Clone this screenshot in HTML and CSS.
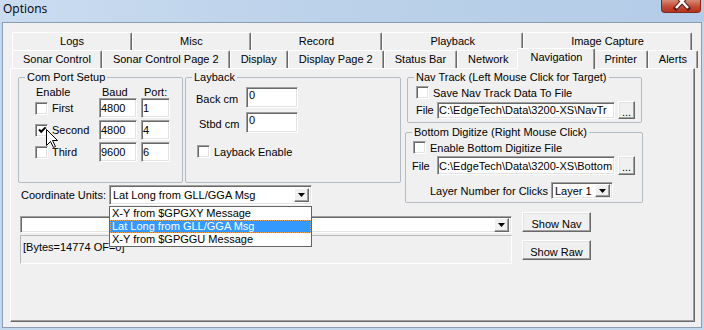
FILE: index.html
```html
<!DOCTYPE html>
<html>
<head>
    <meta charset="UTF-8">
    <title>Options</title>
    <link rel="stylesheet" href="styles.css">
</head>
<body>
    <div class="window">
        <div class="titlebar">
            <span class="title">Options</span>
            <span class="close">
                <svg width="40" height="12" viewBox="0 0 40 12">
                    <path d="M14 -5 L26 8 M26 -5 L14 8" stroke="#5b1d14" stroke-width="4.5" stroke-linecap="square"/>
                    <path d="M14 -5 L26 8 M26 -5 L14 8" stroke="#fff" stroke-width="2.5"/>
                </svg>
            </span>
        </div>

        <div class="client">
            <div class="tabs">
                <div class="tab-row">
                    <div class="tab">Logs</div>
                    <div class="tab">Misc</div>
                    <div class="tab">Record</div>
                    <div class="tab">Playback</div>
                    <div class="tab">Image Capture</div>
                </div>
                <div class="tab-row">
                    <div class="tab">Sonar Control</div>
                    <div class="tab">Sonar Control Page 2</div>
                    <div class="tab">Display</div>
                    <div class="tab">Display Page 2</div>
                    <div class="tab">Status Bar</div>
                    <div class="tab">Network</div>
                    <div class="tab active">Navigation</div>
                    <div class="tab">Printer</div>
                    <div class="tab">Alerts</div>
                </div>
            </div>

            <div class="panel">
                <div class="upper">
                    <div class="upper-left">
                        <div class="groups">
                            <fieldset class="group com-port">
                                <legend>Com Port Setup</legend>
                                <div class="port-grid port-head">
                                    <span class="head-enable">Enable</span>
                                    <span class="head-baud">Baud</span>
                                    <span class="head-port">Port:</span>
                                </div>
                                <div class="port-grid port-row">
                                    <span class="check-line"><span class="cb"></span><span class="cb-label">First</span></span>
                                    <span class="field baud">4800</span>
                                    <span class="field port">1</span>
                                </div>
                                <div class="port-grid port-row">
                                    <span class="check-line">
                                        <span class="cb">
                                            <svg width="9" height="9" viewBox="0 0 9 9"><polyline points="1,3.5 3.2,5.8 7.6,1.4" fill="none" stroke="#000" stroke-width="2"/></svg>
                                        </span>
                                        <span class="cb-label">Second</span>
                                    </span>
                                    <span class="field baud">4800</span>
                                    <span class="field port">4</span>
                                </div>
                                <div class="port-grid port-row">
                                    <span class="check-line"><span class="cb"></span><span class="cb-label">Third</span></span>
                                    <span class="field baud">9600</span>
                                    <span class="field port">6</span>
                                </div>
                            </fieldset>

                            <fieldset class="group layback">
                                <legend>Layback</legend>
                                <div class="lb-row">
                                    <span class="lb-label">Back cm</span>
                                    <span class="field lb-field">0</span>
                                </div>
                                <div class="lb-row second">
                                    <span class="lb-label">Stbd cm</span>
                                    <span class="field lb-field">0</span>
                                </div>
                                <div class="check-line lb-check">
                                    <span class="cb"></span><span class="cb-label">Layback Enable</span>
                                </div>
                            </fieldset>
                        </div>

                        <div class="coord-row">
                            <span class="coord-label">Coordinate Units:</span>
                            <div class="combo coord-combo">
                                <span class="combo-text">Lat Long from GLL/GGA Msg</span>
                                <span class="combo-btn"><svg width="7" height="4" viewBox="0 0 7 4"><polygon points="0,0 7,0 3.5,4" fill="#000"/></svg></span>
                                <div class="drop-list">
                                    <div class="drop-item">X-Y from $GPGXY Message</div>
                                    <div class="drop-item selected">Lat Long from GLL/GGA Msg</div>
                                    <div class="drop-item">X-Y from $GPGGU Message</div>
                                </div>
                            </div>
                        </div>
                    </div>

                    <div class="upper-right">
                        <fieldset class="group nav-track">
                            <legend>Nav Track (Left Mouse Click for Target)</legend>
                            <div class="check-line nav-check">
                                <span class="cb"></span><span class="cb-label">Save Nav Track Data To File</span>
                            </div>
                            <div class="file-row">
                                <span class="file-label">File</span>
                                <span class="field file-field">C:\EdgeTech\Data\3200-XS\NavTr</span>
                                <span class="btn dots">...</span>
                            </div>
                        </fieldset>

                        <fieldset class="group bottom-dig">
                            <legend>Bottom Digitize (Right Mouse Click)</legend>
                            <div class="check-line nav-check">
                                <span class="cb"></span><span class="cb-label">Enable Bottom Digitize File</span>
                            </div>
                            <div class="file-row">
                                <span class="file-label">File</span>
                                <span class="field file-field">C:\EdgeTech\Data\3200-XS\Bottom</span>
                                <span class="btn dots">...</span>
                            </div>
                            <div class="layer-row">
                                <span class="layer-label">Layer Number for Clicks</span>
                                <div class="combo layer-combo">
                                    <span class="combo-text">Layer 1</span>
                                    <span class="combo-btn"><svg width="7" height="4" viewBox="0 0 7 4"><polygon points="0,0 7,0 3.5,4" fill="#000"/></svg></span>
                                </div>
                            </div>
                        </fieldset>
                    </div>
                </div>

                <div class="lower">
                    <div class="lower-left">
                        <div class="combo msg-combo">
                            <span class="combo-text"></span>
                            <span class="combo-btn"><svg width="7" height="4" viewBox="0 0 7 4"><polygon points="0,0 7,0 3.5,4" fill="#000"/></svg></span>
                        </div>
                        <div class="bytes-box">[Bytes=14774 OF=0]</div>
                    </div>
                    <div class="lower-right">
                        <span class="btn big-btn">Show Nav</span>
                        <span class="btn big-btn raw">Show Raw</span>
                    </div>
                </div>
            </div>
        </div>

        <!-- mouse pointer resting over the Second checkbox -->
        <svg class="cursor" width="13" height="20" viewBox="0 0 13 20">
            <polygon points="0.5,0.5 0.5,16.5 4.5,12.5 7.5,18.5 9.5,17.5 6.5,11.5 11.5,11.5" fill="#fff" stroke="#000" stroke-width="1"/>
        </svg>
    </div>
</body>
</html>
```

FILE: styles.css
```css
* {
    box-sizing: border-box;
}
body {
    margin: 0;
    width: 704px;
    height: 330px;
    overflow: hidden;
    background: #c3d7ed;
    font-family: "Liberation Sans", Arial, sans-serif;
    font-size: 11px;
    color: #000;
}
.window {
    position: relative;
    height: 330px;
    display: flex;
    flex-direction: column;
}

/* title bar */
.titlebar {
    height: 22px;
    display: flex;
    justify-content: space-between;
    align-items: flex-start;
    background: linear-gradient(90deg, #cadcf0 0%, #bcd2ea 45%, #b4cce7 100%);
}
.title {
    font-family: "Open Sans", "Liberation Sans", sans-serif;
    font-size: 12px;
    line-height: 16px;
    margin: 1px 0 0 3px;
    color: #000;
}
.close {
    width: 40px;
    height: 13px;
    margin-right: 3px;
    border: 1px solid #7a2b20;
    border-top: none;
    border-radius: 0 0 4px 4px;
    background: linear-gradient(#d58a78, #c64a33 55%, #b5331e);
    overflow: hidden;
}
.close svg {
    display: block;
}

/* client area */
.client {
    margin: 0 2px;
    height: 306px;
    border: 1px solid #8d9db1;
    background: #f0f0f0;
}
.tabs {
    margin-top: 9px;
    padding: 0 9px;
}
.tab-row {
    display: flex;
    height: 18px;
}
.tab {
    flex: 1 1 auto;
    padding: 0 10px;
    text-align: center;
    white-space: nowrap;
    line-height: 17px;
    background: #f0f0f0;
    border-top: 1px solid #fff;
    border-left: 1px solid #fff;
    border-right: 1px solid #696969;
    box-shadow: inset -1px 0 0 #a0a0a0;
    border-radius: 2px 2px 0 0;
}
.tab.active {
    position: relative;
    z-index: 1;
    align-self: flex-start;
    height: 21px;
    margin: -2px -2px 0;
    padding: 0 12px;
}

.panel {
    height: 254px;
    margin: 0 6px 0 7px;
    padding: 2px 0 0 7px;
    border-top: 1px solid #fff;
    border-left: 1px solid #fff;
    border-right: 1px solid #696969;
    border-bottom: 1px solid #696969;
    box-shadow: inset -1px -1px 0 #a0a0a0;
}

/* group boxes */
.group {
    margin: 0;
    padding: 0;
    min-width: 0;
    border: 1px solid #b3bcc5;
    border-radius: 2px;
}
.group legend {
    margin-left: 6px;
    padding: 0 2px;
    line-height: 13px;
}
.upper {
    display: flex;
    align-items: flex-start;
}
.upper-left {
    width: 383px;
}
.groups {
    display: flex;
}
.com-port {
    width: 165px;
    height: 112px;
}
.layback {
    width: 216px;
    height: 112px;
    margin-left: 2px;
}
.upper-right {
    width: 238px;
    margin-left: 4px;
}
.nav-track {
    width: 235px;
    height: 52px;
    margin-left: 2px;
}
.bottom-dig {
    width: 238px;
    height: 77px;
    margin-top: 3px;
}

/* common controls */
.field {
    display: flex;
    align-items: center;
    padding: 0 1px;
    background: #fff;
    white-space: nowrap;
    overflow: hidden;
    border: 1px solid;
    border-color: #a0a0a0 #fff #fff #a0a0a0;
    box-shadow: inset 1px 1px 0 #696969, inset -1px -1px 0 #e3e3e3;
}
.cb {
    display: inline-flex;
    align-items: center;
    justify-content: center;
    width: 13px;
    height: 13px;
    flex: none;
    background: #fff;
    border: 1px solid;
    border-color: #a0a0a0 #fff #fff #a0a0a0;
    box-shadow: inset 1px 1px 0 #696969, inset -1px -1px 0 #e3e3e3;
}
.cb svg {
    display: block;
    margin: 1px 0 0 1px;
}
.check-line {
    display: flex;
    align-items: center;
}
.cb-label {
    margin-left: 4px;
    white-space: nowrap;
}
.btn {
    display: flex;
    align-items: center;
    justify-content: center;
    background: #f0f0f0;
    white-space: nowrap;
    border: 1px solid;
    border-color: #fff #696969 #696969 #fff;
    box-shadow: inset -1px -1px 0 #a0a0a0, inset 1px 1px 0 #e3e3e3;
}
.combo {
    position: relative;
    display: flex;
    align-items: center;
    background: #fff;
    border: 1px solid;
    border-color: #a0a0a0 #fff #fff #a0a0a0;
    box-shadow: inset 1px 1px 0 #696969, inset -1px -1px 0 #e3e3e3;
}
.combo-text {
    flex: 1;
    padding-left: 3px;
    white-space: nowrap;
}
.combo-btn {
    display: flex;
    align-items: center;
    justify-content: center;
    width: 15px;
    height: 14px;
    margin-right: 2px;
    background: #f0f0f0;
    border: 1px solid;
    border-color: #fff #696969 #696969 #fff;
    box-shadow: inset -1px -1px 0 #a0a0a0;
}

/* com port */
.port-grid {
    display: grid;
    grid-template-columns: 64px 42px 29px;
    padding-left: 16px;
}
.port-head {
    margin-top: 2px;
    height: 12px;
    line-height: 12px;
}
.head-enable {
    margin-left: 1px;
}
.head-baud,
.head-port {
    margin-left: 3px;
}
.port-row {
    height: 20px;
    margin-bottom: 2px;
}
.field.baud {
    width: 38px;
}
.field.port {
    width: 29px;
}

/* layback */
.lb-row {
    display: flex;
    height: 21px;
    margin-top: 3px;
    padding-left: 10px;
}
.lb-row.second {
    margin-top: 4px;
}
.lb-label {
    width: 50px;
    margin-top: 6px;
    line-height: 13px;
}
.lb-row.second .lb-label {
    padding-left: 3px;
}
.field.lb-field {
    width: 52px;
    align-items: flex-start;
    padding-top: 1px;
    padding-left: 2px;
}
.lb-check {
    margin-top: 12px;
    padding-left: 11px;
}

/* nav track / bottom digitize */
.nav-check {
    margin-top: 2px;
    padding-left: 8px;
}
.bottom-dig .nav-check {
    padding-left: 7px;
}
.file-row {
    display: flex;
    align-items: center;
    height: 18px;
    margin-top: 2px;
    padding-left: 8px;
}
.file-label {
    width: 21px;
}
.field.file-field {
    width: 178px;
    height: 17px;
    padding-left: 1px;
}
.btn.dots {
    width: 17px;
    height: 18px;
    margin-left: 3px;
    padding-top: 3px;
}
.bottom-dig .file-row {
    height: 19px;
    padding-left: 6px;
}
.bottom-dig .file-label {
    width: 25px;
}
.bottom-dig .field.file-field,
.bottom-dig .btn.dots {
    height: 19px;
}
.layer-row {
    display: flex;
    align-items: center;
    margin-top: 7px;
    padding-left: 24px;
}
.layer-label {
    width: 121px;
    white-space: nowrap;
}
.layer-combo {
    width: 62px;
    height: 17px;
}
.layer-combo .combo-btn {
    height: 13px;
}

/* coordinate units */
.coord-row {
    display: flex;
    align-items: center;
    height: 20px;
    margin-top: 2px;
    padding-left: 3px;
}
.coord-label {
    width: 88px;
}
.coord-combo {
    width: 203px;
    height: 20px;
}
.drop-list {
    position: absolute;
    z-index: 5;
    top: calc(100% + 2px);
    left: -1px;
    width: 203px;
    background: #fff;
    border: 1px solid #646464;
}
.drop-item {
    height: 13px;
    line-height: 13px;
    padding-left: 2px;
    white-space: nowrap;
}
.drop-item.selected {
    background: #3399ff;
    color: #fff;
    outline: 1px dotted #e9a25c;
    outline-offset: -1px;
}

/* message area */
.lower {
    display: flex;
    align-items: flex-start;
    margin-top: 7px;
    padding-left: 2px;
}
.lower-left {
    width: 492px;
    margin-top: 4px;
}
.msg-combo {
    height: 17px;
}
.bytes-box {
    height: 29px;
    margin-top: 2px;
    padding: 5px 0 0 2px;
    line-height: 13px;
    border: 1px solid;
    border-color: #b9b9b9 #fff #fff #b9b9b9;
}
.lower-right {
    margin-left: 10px;
}
.btn.big-btn {
    width: 69px;
    height: 20px;
    padding-top: 3px;
}
.btn.big-btn.raw {
    margin-top: 8px;
}

.cursor {
    position: absolute;
    left: 46px;
    top: 129px;
}
```
